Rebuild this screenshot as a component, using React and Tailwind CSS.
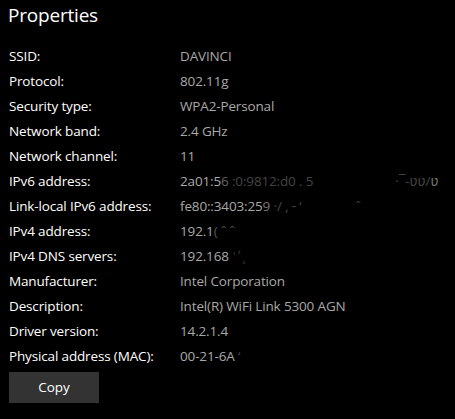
const rows = [
  { label: "SSID:", value: "DAVINCI" },
  { label: "Protocol:", value: "802.11g" },
  { label: "Security type:", value: "WPA2-Personal" },
  { label: "Network band:", value: "2.4 GHz" },
  { label: "Network channel:", value: "11" },
  {
    label: "IPv6 address:",
    value: (
      <>
        2a01:5<span className="opacity-60">6</span>
        <span className="opacity-40"> :0:9812:d0 . 5</span>
        <span className="ml-[82px] opacity-40">·‾-ʋʋ/</span>
        <span className="opacity-70">ʋ</span>
      </>
    ),
  },
  {
    label: "Link-local IPv6 address:",
    value: (
      <>
        fe80::3403:25<span className="opacity-70">9</span>
        <span className="opacity-40"> ·/ ,  ‑ ‘</span>
        <span className="ml-[54px] opacity-40">ˆ</span>
      </>
    ),
  },
  {
    label: "IPv4 address:",
    value: (
      <>
        192.1<span className="opacity-50">( ˆ ˆ</span>
      </>
    ),
  },
  {
    label: "IPv4 DNS servers:",
    value: (
      <>
        192.168<span className="ml-1 opacity-30">' ̓  ¸</span>
      </>
    ),
  },
  { label: "Manufacturer:", value: "Intel Corporation" },
  { label: "Description:", value: "Intel(R) WiFi Link 5300 AGN" },
  { label: "Driver version:", value: "14.2.1.4" },
  {
    label: "Physical address (MAC):",
    value: (
      <>
        00-21-6A<span className="opacity-40"> ‘</span>
      </>
    ),
  },
];

export default function App() {
  return (
    <div
      className="h-[419px] w-[455px] overflow-hidden bg-black text-white"
      style={{ fontFamily: '"Open Sans", "Noto Sans", sans-serif' }}
    >
      <h1 className="pl-[8px] pt-[1px] text-[19px] leading-[28px] font-normal tracking-[-0.2px]">
        Properties
      </h1>
      <div className="mt-[15px] flex flex-col">
        {rows.map((row) => (
          <div key={row.label} className="flex h-[25px] items-center text-[13.5px] tracking-[-0.15px]">
            <div className="w-[180px] shrink-0 pl-[9px] text-white">{row.label}</div>
            <div className="whitespace-nowrap text-[#a8a8a8]">{row.value}</div>
          </div>
        ))}
      </div>
      <button className="ml-[9px] mt-[3px] h-[31px] w-[90px] bg-[#333333] text-[13.5px] text-white">
        Copy
      </button>
    </div>
  );
}
